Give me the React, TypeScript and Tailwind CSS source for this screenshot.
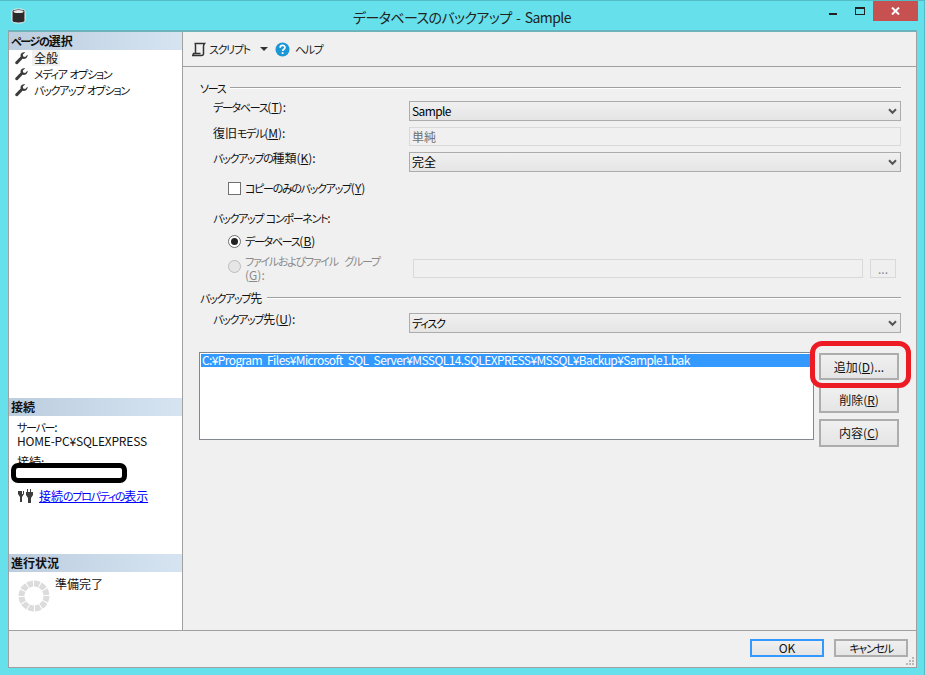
import { ReactNode } from 'react'

// Meiryo UI draws kana much narrower than its kanji, so kana runs get their own size and tracking
const Txt = ({ s }: { s: string }) => (
  <>
    {s.split(/([\u3040-\u30ff]+)/).map((part, i) =>
      i % 2 === 1 ? (
        <span key={i} className="text-[11px] tracking-[-1.3px]">
          {part}
        </span>
      ) : (
        <span key={i}>{part}</span>
      )
    )}
  </>
)

const Mn = ({ pre, k, post }: { pre: string; k: string; post?: string }) => (
  <>
    <Txt s={pre} />(<u>{k}</u>){post}
  </>
)

const Wrench = () => (
  <svg width="13" height="13" viewBox="0 0 13 13" className="shrink-0">
    <path d="M12.600 2.600 10.200 5 8.200 4.400 7.800 2.600 10.200.4C8.200-.3 6 .8 5.600 2.800c-.1.7-.1 1.200.1 1.800L.8 9.400c-.8.8-.8 1.700-.2 2.400.7.7 1.600.6 2.300-.1l4.700-4.900c2.400.7 5-1 5-3.300 0-.3 0-.6 0-.9Z" fill="#3c3c3c" />
  </svg>
)

const Chevron = () => (
  <svg width="9" height="7" viewBox="0 0 9 7" className="shrink-0">
    <path d="M1 1.200 4.500 4.800 8 1.200" fill="none" stroke="#555" strokeWidth="2" />
  </svg>
)

const Dropdown = ({ children }: { children: ReactNode }) => (
  <div className="flex h-[20px] flex-1 items-center justify-between border border-[#acacac] bg-gradient-to-b from-[#f0f0f0] to-[#e5e5e5] pl-[2px] pr-[3px] text-[#000]">
    <span>{children}</span>
    <Chevron />
  </div>
)

const FieldRow = ({ label, children, className }: { label: ReactNode; children: ReactNode; className: string }) => (
  <div className={`flex items-start ${className}`}>
    <div className="-mt-[1px] w-[210px] shrink-0 pl-[14px] leading-[13px]">{label}</div>
    {children}
  </div>
)

const SectionTitle = ({ title, className }: { title: string; className: string }) => (
  <div className={`flex h-[14px] items-center gap-[5px] ${className}`}>
    <span className="shrink-0 pl-[1px]">
      <Txt s={title} />
    </span>
    <div className="h-[2px] flex-1 border-t border-t-[#a0a0a0] border-b border-b-white" />
  </div>
)

const SideHeader = ({ title }: { title: string }) => (
  <div className="flex h-[18px] items-center bg-gradient-to-r from-[#bccdde] to-[#d6e4f2] pl-[2px] font-bold">
    <span>
      <Txt s={title} />
    </span>
  </div>
)

const SideButton = ({ children, className }: { children: ReactNode; className: string }) => (
  <div className={`flex w-[80px] items-center justify-center border-2 border-[#adadad] bg-gradient-to-b from-[#f0f0f0] to-[#e5e5e5] ${className}`}>
    <span>{children}</span>
  </div>
)

export default function App() {
  return (
    <div className="relative flex h-[675px] w-[925px] flex-col overflow-hidden border-t border-r border-[#52bcc6] bg-[#66e0ea] text-[12px] leading-[14px] text-[#111] [font-family:'Noto_Sans_CJK_JP','Noto_Sans',sans-serif] [font-feature-settings:'palt']">
      {/* Title bar */}
      <div className="relative flex h-[29px] shrink-0 items-start">
        <svg width="15" height="16" viewBox="0 0 15 16" className="ml-[11px] mt-[7px]">
          <path d="M1 3.500C1 1.800 3.800 1 7.500 1S14 1.800 14 3.500v9c0 1.700-2.800 2.500-6.500 2.500S1 14.200 1 12.500Z" fill="#2b2b2b" stroke="#f4f4f4" />
          <ellipse cx="7.500" cy="3.500" rx="5" ry="1.600" fill="#e8e8e8" />
        </svg>
        <div className="absolute left-[353px] top-[8px] text-[14px] leading-[16px] tracking-[-0.6px] [word-spacing:2px] text-[#222]">データベースのバックアップ - Sample</div>
        <div className="ml-auto mr-[6px] flex items-start">
          <div className="mt-[12px] h-[2px] w-[8px] bg-[#222]" />
          <div className="ml-[18px] mt-[6px] h-[8px] w-[10px] border border-t-2 border-[#222]" />
          <div className="ml-[8px] flex h-[20px] w-[45px] items-center justify-center bg-[#c75050]">
            <svg width="9" height="8" viewBox="0 0 9 8">
              <path d="M1 .5 8 7.500M8 .5 1 7.500" stroke="#fff" strokeWidth="2" />
            </svg>
          </div>
        </div>
      </div>

      {/* Client area */}
      <div className="mb-[7px] ml-[8px] mr-[7px] flex flex-1 flex-col border border-[#a0a0a0] border-t-2 border-t-[#6cb4bc] bg-[#f0f0f0]">
        <div className="flex h-[599px] border-b border-b-[#a0a0a0]">
          {/* Sidebar */}
          <div className="flex w-[174px] shrink-0 flex-col border-r border-r-[#a0a0a0] bg-white">
            <SideHeader title="ページの選択" />
            <div className="flex flex-col pl-[6px]">
              <div className="flex h-[16px] items-center gap-[4px]">
                <Wrench />
                <span className="bg-[#f0f0f0] px-[2px] leading-[16px]">全般</span>
              </div>
              <div className="flex h-[16px] items-center gap-[6px]">
                <Wrench />
                <span>
                  <Txt s="メディア オプション" />
                </span>
              </div>
              <div className="flex h-[16px] items-center gap-[6px]">
                <Wrench />
                <span>
                  <Txt s="バックアップ オプション" />
                </span>
              </div>
            </div>

            <div className="mt-[300px]">
              <SideHeader title="接続" />
            </div>
            <div className="flex h-[138px] flex-col pl-[8px] pt-[4px]">
              <span className="leading-[13px]">
                <Txt s="サーバー:" />
              </span>
              <span className="leading-[13px] tracking-[-0.2px]">HOME-PC¥SQLEXPRESS</span>
              <span className="mt-[8px]">接続:</span>
              <div className="mt-[20px] flex items-center gap-[5px] pl-[1px]">
                <svg width="16" height="14" viewBox="0 0 16 14">
                  <path d="M0 2v3l2 3v5h2V8l2-3V2H5v3H4V2H3zM9 0h1v3h2V0h1v3h2v3l-2 3v5h-3V9L8 6V3h1z" fill="#3c3c3c" />
                </svg>
                <a className="text-[#0000ff] underline">
                  <Txt s="接続のプロパティの表示" />
                </a>
              </div>
            </div>

            <SideHeader title="進行状況" />
            <div className="flex flex-1 items-start pl-[9px] pt-[5px]">
              <svg width="32" height="32" viewBox="0 0 32 32" className="mt-[3px]">
                <circle cx="16" cy="16" r="12.500" fill="none" stroke="#dcdcdc" strokeWidth="6" strokeDasharray="5.500 1" />
              </svg>
              <span className="ml-[5px]">準備完了</span>
            </div>
          </div>

          {/* Main panel */}
          <div className="flex min-w-0 flex-1 flex-col">
            <div className="flex h-[35px] shrink-0 items-center border-b border-b-[#a0a0a0] pl-[8px] text-[#222]">
              <svg width="15" height="15" viewBox="0 0 15 15">
                <path d="M3.500 1.500h10c-1 1-1 2-1 3v7c0 1-1 2-2 2H1c1 0 1.500-.5 1.500-2h7M3.500 1.500c1 0 1 1 1 2v8" fill="none" stroke="#333" strokeWidth="1.500" />
              </svg>
              <span className="ml-[3px]">
                <Txt s="スクリプト" />
              </span>
              <svg width="8" height="4" viewBox="0 0 8 4" className="ml-[10px]">
                <path d="M0 0h8L4 4Z" fill="#333" />
              </svg>
              <svg width="15" height="15" viewBox="0 0 15 15" className="ml-[7px]">
                <circle cx="7.500" cy="7.500" r="7" fill="#1c97d6" />
                <path d="M5.200 5.700c0-3 4.800-3 4.800-.2 0 1.800-2.400 1.700-2.400 3.600" fill="none" stroke="#fff" strokeWidth="1.700" />
                <rect x="6.700" y="10.200" width="1.800" height="1.800" fill="#fff" />
              </svg>
              <span className="ml-[5px]">
                <Txt s="ヘルプ" />
              </span>
            </div>

            <div className="flex flex-col pl-[16px] pr-[15px]">
              <SectionTitle title="ソース" className="mt-[14px]" />
              <FieldRow className="mt-[6px]" label={<Mn pre="データベース" k="T" post=":" />}>
                <Dropdown>
                  <span className="tracking-[-0.6px]">Sample</span>
                </Dropdown>
              </FieldRow>
              <FieldRow className="mt-[6px]" label={<Mn pre="復旧モデル" k="M" post=":" />}>
                <div className="flex h-[19px] flex-1 items-center border border-[#d9d9d9] bg-[#f0f0f0] pl-[2px] text-[#6d6d6d]">単純</div>
              </FieldRow>
              <FieldRow className="mt-[6px]" label={<Mn pre="バックアップの種類" k="K" post=":" />}>
                <Dropdown>完全</Dropdown>
              </FieldRow>
              <div className="mt-[9px] flex h-[14px] items-center pl-[29px]">
                <div className="h-[13px] w-[13px] border border-[#707070] bg-white" />
                <span className="ml-[4px]">
                  <Mn pre="コピーのみのバックアップ" k="Y" />
                </span>
              </div>
              <div className="mt-[16px] h-[14px] pl-[14px]">
                <Txt s="バックアップ コンポーネント:" />
              </div>
              <div className="mt-[9px] flex h-[14px] items-center pl-[29px]">
                <div className="flex h-[13px] w-[13px] items-center justify-center rounded-full border border-[#707070] bg-white">
                  <div className="h-[7px] w-[7px] rounded-full bg-[#222]" />
                </div>
                <span className="ml-[4px]">
                  <Mn pre="データベース" k="B" />
                </span>
              </div>
              <div className="mt-[10px] flex h-[22px] items-start pl-[29px] text-[#9a9a9a]">
                <div className="mt-[2px] h-[13px] w-[13px] shrink-0 rounded-full border border-[#bcbcbc] bg-[#e6e6e6]" />
                <span className="-mt-[4px] ml-[4px] w-[168px] shrink-0 leading-[13px] [word-spacing:4px] text-[#8a8a8a]">
                  <Txt s="ファイルおよびファイル グループ" />
                  <br />(<u>G</u>):
                </span>
                <div className="mt-[1px] h-[19px] w-[450px] shrink-0 border border-[#d9d9d9] bg-[#f0f0f0]" />
                <div className="ml-[7px] mt-[1px] flex h-[19px] w-[26px] shrink-0 items-center justify-center border border-[#d9d9d9] bg-[#efefef] text-[#8a8a8a]">...</div>
              </div>

              <SectionTitle title="バックアップ先" className="mt-[11px]" />
              <FieldRow className="mt-[8px]" label={<Mn pre="バックアップ先" k="U" post=":" />}>
                <Dropdown>
                  <Txt s="ディスク" />
                </Dropdown>
              </FieldRow>

              <div className="mt-[19px] flex items-start">
                <div className="h-[88px] w-[615px] shrink-0 border border-[#828790] bg-white p-[1px]">
                  <div className="h-[13px] bg-[#3399ff] pl-[1px] leading-[12px] tracking-[-0.6px] [word-spacing:3px] text-white">C:¥Program Files¥Microsoft SQL Server¥MSSQL14.SQLEXPRESS¥MSSQL¥Backup¥Sample1.bak</div>
                </div>
                <div className="ml-[5px] flex flex-col pt-[1px]">
                  <SideButton className="h-[27px]">追加(<u>D</u>)...</SideButton>
                  <SideButton className="mt-[6px] h-[27px]">削除(<u>R</u>)</SideButton>
                  <SideButton className="mt-[6px] h-[28px]">内容(<u>C</u>)</SideButton>
                </div>
              </div>
            </div>
          </div>
        </div>

        {/* Footer buttons */}
        <div className="relative flex flex-1 items-start justify-end pr-[8px] pt-[8px]">
          <div className="flex h-[18px] w-[74px] items-center justify-center border-2 border-[#3399ff] bg-gradient-to-b from-[#f0f0f0] to-[#e5e5e5]">OK</div>
          <div className="ml-[10px] flex h-[18px] w-[74px] items-center justify-center border-2 border-[#adadad] bg-gradient-to-b from-[#f0f0f0] to-[#e5e5e5]">
            <span>
              <Txt s="キャンセル" />
            </span>
          </div>
          <svg width="9" height="9" viewBox="0 0 9 9" className="absolute bottom-[1px] right-[1px]">
            <path d="M6 0h2v2H6zM3 3h2v2H3zM6 3h2v2H6zM0 6h2v2H0zM3 6h2v2H3zM6 6h2v2H6z" fill="#b8b8b8" />
          </svg>
        </div>
      </div>

      {/* Hand-drawn marks over the screenshot */}
      <div className="absolute left-[11px] top-[462px] h-[20px] w-[116px] rounded-[7px] border-[5px] border-black bg-white" />
      <div className="absolute left-[810px] top-[340px] h-[47px] w-[101px] rounded-[12px] border-[5px] border-[#ed1c24]" />
    </div>
  )
}
